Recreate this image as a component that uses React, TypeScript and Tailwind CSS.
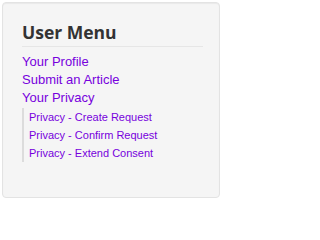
const links = ['Your Profile', 'Submit an Article', 'Your Privacy'];
const privacyLinks = ['Privacy - Create Request', 'Privacy - Confirm Request', 'Privacy - Extend Consent'];

export default function App() {
  return (
    <div className="w-[223px] h-[201px] bg-white p-[2px]">
      <div className="w-[218px] h-[196px] rounded-[4px] border border-[#e3e3e3] bg-[#f5f5f5] pt-[19px] pl-[19px] pr-[16px] shadow-[inset_0_1px_1px_rgba(0,0,0,0.05)]">
        <h3 className="font-['Open_Sans',sans-serif] text-[17.5px] leading-[20px] font-bold text-[#333] pb-[4px] border-b border-[#e6e6e6]">
          User Menu
        </h3>
        <ul className="mt-[6px] font-['Liberation_Sans',Arial,sans-serif] text-[13px] leading-[18px] text-[#7700dd]">
          {links.map(label => (
            <li key={label}>
              <a href="#">{label}</a>
            </li>
          ))}
          <li>
            <ul className="mt-[1px] border-l-2 border-[#dcdcdc] pl-[5px] text-[11px]">
              {privacyLinks.map(label => (
                <li key={label}>
                  <a href="#">{label}</a>
                </li>
              ))}
            </ul>
          </li>
        </ul>
      </div>
    </div>
  );
}
